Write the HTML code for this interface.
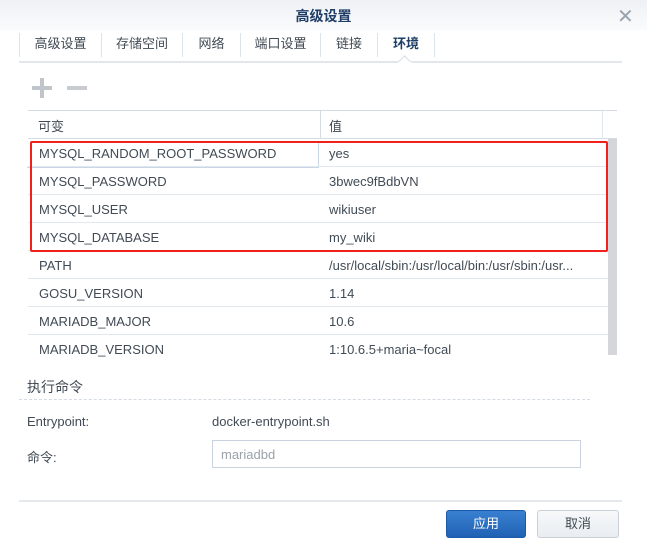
<!DOCTYPE html>
<html><head><meta charset="utf-8"><style>
*{margin:0;padding:0;box-sizing:border-box}
body{width:647px;height:544px;background:#fff;font-family:"Liberation Sans","Noto Sans CJK SC",sans-serif;font-size:13px;color:#414b55;position:relative;overflow:hidden}
.a{position:absolute}
.title{left:0;top:0;width:647px;height:30px;background:linear-gradient(#eef1f5,#fafbfc);text-align:center;line-height:32px;font-size:14px;color:#1f3e66;font-weight:bold}
.tab{top:33px;height:24px;line-height:22px;border-left:1px solid #dde3ea;text-align:center;color:#414b55}
.row{left:28px;width:580px;height:28px;border-bottom:1px solid #e3e8ee}
.row span{position:absolute;top:7px}
</style></head><body>
<div class="a title">高级设置</div>
<div class="a" style="left:617px;top:4px;font-size:20px;color:#9aa3ad;font-weight:normal">✕</div>
<div class="a tab" style="left:19px;width:82px">高级设置</div>
<div class="a tab" style="left:101px;width:81px">存储空间</div>
<div class="a tab" style="left:182px;width:58px">网络</div>
<div class="a tab" style="left:240px;width:80px">端口设置</div>
<div class="a tab" style="left:320px;width:57px">链接</div>
<div class="a tab" style="left:377px;width:57px;color:#1f3e66;font-weight:bold">环境</div>
<div class="a" style="left:434px;top:33px;width:1px;height:24px;background:#dde3ea"></div>
<div class="a" style="left:19px;top:61px;width:603px;height:2px;background:#e3e7ec"></div>
<div class="a" style="left:400px;top:57px;width:9px;height:9px;background:#fff;border-left:1px solid #d8dde3;border-top:1px solid #d8dde3;transform:rotate(45deg)"></div>
<div class="a" style="left:398px;top:62px;width:14px;height:4px;background:#fff"></div>
<div class="a" style="left:32px;top:86px;width:20px;height:4px;background:#c0c5cb"></div>
<div class="a" style="left:40px;top:78px;width:4px;height:20px;background:#c0c5cb"></div>
<div class="a" style="left:67px;top:86px;width:20px;height:4px;background:#c8ccd1"></div>
<div class="a" style="left:28px;top:110px;width:589px;height:1px;background:#d4dbe3"></div>
<div class="a row" style="left:28px;top:111px;width:589px;height:28px;border-bottom:1px solid #d4dbe3"><span style="left:10px;top:5px">可变</span><span style="left:301px;top:5px">值</span></div>
<div class="a" style="left:320px;top:111px;width:1px;height:28px;background:#d4dbe3"></div>
<div class="a" style="left:602px;top:111px;width:1px;height:28px;background:#e3e8ee"></div>
<div class="a" style="left:608px;top:139px;width:9px;height:216px;background:#d4d6d9"></div>
<div class="a" style="left:27px;top:143px;width:292px;height:25px;border:1px solid #c9d6e6;border-left:none;border-top:none"></div>
<div class="a row" style="left:28px;top:139px;width:580px"><span style="left:11px">MYSQL_RANDOM_ROOT_PASSWORD</span><span style="left:301px">yes</span></div>
<div class="a row" style="left:28px;top:167px;width:580px"><span style="left:11px">MYSQL_PASSWORD</span><span style="left:301px">3bwec9fBdbVN</span></div>
<div class="a row" style="left:28px;top:195px;width:580px"><span style="left:11px">MYSQL_USER</span><span style="left:301px">wikiuser</span></div>
<div class="a row" style="left:28px;top:223px;width:580px"><span style="left:11px">MYSQL_DATABASE</span><span style="left:301px">my_wiki</span></div>
<div class="a row" style="left:28px;top:251px;width:580px"><span style="left:11px">PATH</span><span style="left:301px">/usr/local/sbin:/usr/local/bin:/usr/sbin:/usr...</span></div>
<div class="a row" style="left:28px;top:279px;width:580px"><span style="left:11px">GOSU_VERSION</span><span style="left:301px">1.14</span></div>
<div class="a row" style="left:28px;top:307px;width:580px"><span style="left:11px">MARIADB_MAJOR</span><span style="left:301px">10.6</span></div>
<div class="a row" style="left:28px;top:335px;width:580px;border:none"><span style="left:11px">MARIADB_VERSION</span><span style="left:301px">1:10.6.5+maria~focal</span></div>
<div class="a" style="left:30px;top:141px;width:578px;height:111px;border:2px solid #f0201a;border-radius:2px"></div>
<div class="a" style="left:27px;top:377px;font-size:14px;color:#414b55">执行命令</div>
<div class="a" style="left:19px;top:399px;width:571px;border-top:1px dashed #d4dbe3"></div>
<div class="a" style="left:27px;top:414px">Entrypoint:</div>
<div class="a" style="left:212px;top:414px">docker-entrypoint.sh</div>
<div class="a" style="left:27px;top:447px">命令:</div>
<div class="a" style="left:212px;top:440px;width:369px;height:28px;border:1px solid #c9d3df;padding:6px 0 0 8px;color:#9aa2ab">mariadbd</div>
<div class="a" style="left:19px;top:500px;width:603px;height:2px;background:#e5e8ec"></div>
<div class="a" style="left:446px;top:510px;width:80px;height:28px;border-radius:3px;background:linear-gradient(#3a80d0,#1f62b5);border:1px solid #1b5aa6;color:#fff;text-align:center;line-height:26px">应用</div>
<div class="a" style="left:537px;top:510px;width:82px;height:28px;border-radius:3px;background:linear-gradient(#f6f8fa,#e9edf1);border:1px solid #c9d0d8;color:#414b55;text-align:center;line-height:26px">取消</div>
</body></html>
